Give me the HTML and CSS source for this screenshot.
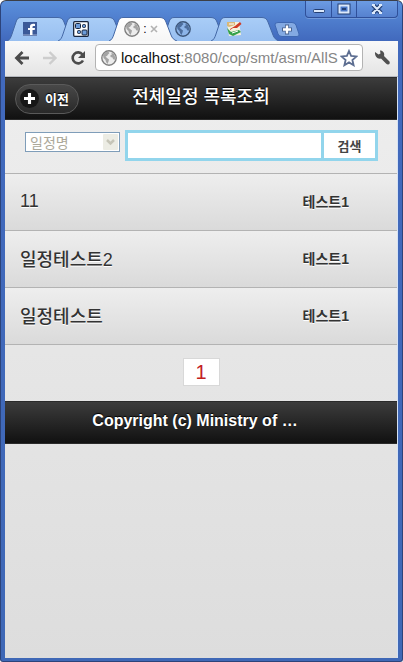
FILE: index.html
```html
<!DOCTYPE html>
<html lang="ko">
<head>
<meta charset="utf-8">
<meta name="viewport" content="width=device-width, initial-scale=1">
<title>전체일정 목록조회</title>
<link rel="stylesheet" href="styles.css">
</head>
<body>
<svg class="defs" aria-hidden="true">
  <defs>
    <linearGradient id="tabFill" x1="0" y1="0" x2="0" y2="1"><stop offset="0" stop-color="#a9cdf7"/><stop offset="1" stop-color="#98bff0"/></linearGradient>
    <linearGradient id="tabActive" x1="0" y1="0" x2="0" y2="1"><stop offset="0" stop-color="#ffffff"/><stop offset="1" stop-color="#f6f6f6"/></linearGradient>
    <symbol id="tabShape" viewBox="0 0 68 24"><path d="M0 24C3 23 4 20 5 17L9 5C10 2 11 .5 14 .5H51C54 .5 56 2 57 5L62 18C63 21 65 23 68 24"/></symbol>
    <symbol id="globe" viewBox="0 0 16 16">
      <circle cx="8" cy="8" r="7.200" fill="var(--sea)" stroke="var(--line)" stroke-width="1.400"/>
      <path d="M2 5L4 2.500L7 1.500L8.500 3L7 4.500L6 6L4.500 6.500L6 8L8 9.500L7.500 11.500L6.500 14L5 12L4.500 10L2.500 8ZM10 2.500L13 4L14.300 7.500L13.500 10L12 9L11.500 7.500L9.500 7L9.500 5L11 4.500Z" fill="var(--land)"/>
    </symbol>
  </defs>
</svg>
<div class="window">
  <header class="titlebar">
    <nav class="tabs" aria-label="탭">
      <button class="tab" aria-label="Facebook"><svg class="shape"><use href="#tabShape"/></svg>
        <svg class="fav" viewBox="0 0 16 16"><rect x="1" y="1" width="14" height="14" fill="#3b5998"/><rect x="1" y="13" width="14" height="2" fill="#6d84b4"/><path d="M8 14V9H6V7H8V5.500C8 3.500 9.500 2.500 13 3V5H12C11 5 10.500 5.300 10.500 6V7H13L12.700 9H10.500V14Z" fill="#fff"/></svg></button>
      <button class="tab" aria-label="앱"><svg class="shape"><use href="#tabShape"/></svg>
        <svg class="fav" viewBox="0 0 16 16"><rect x=".7" y=".7" width="14.600" height="14.600" rx="1" fill="#fff" stroke="#17243c" stroke-width="1.300"/><g fill="#6c9bd8" stroke="#17243c"><rect x="2.500" y="2.500" width="5" height="5" rx="1"/><rect x="9.500" y="3.500" width="3" height="3" rx="1"/><rect x="4.500" y="9.500" width="3" height="3" rx="1"/><rect x="9" y="9" width="5" height="5" rx="1"/></g></svg></button>
      <button class="tab active" aria-label="현재 탭"><svg class="shape"><use href="#tabShape"/></svg>
        <svg class="fav globe"><use href="#globe"/></svg><span class="tab-text">:</span>
        <svg class="close" viewBox="0 0 8 8"><path d="M1 1L7 7M7 1L1 7" stroke="#b2b2b2" stroke-width="1.600"/></svg></button>
      <button class="tab" aria-label="새 페이지"><svg class="shape"><use href="#tabShape"/></svg>
        <svg class="fav globe blue"><use href="#globe"/></svg></button>
      <button class="tab" aria-label="문서"><svg class="shape"><use href="#tabShape"/></svg>
        <svg class="fav" viewBox="0 0 16 16"><path d="M1 1H13L15 14L3 15Z" fill="#f5f1dc"/><path d="M1 1H9V4L3 6L1 5Z" fill="#d9b878"/><path d="M3 3H8" stroke="#fff"/><path d="M4 8L9 5L14 1L15.500 3L11 7L7 7L4 9Z" fill="#cf3b24"/><path d="M1 7L5 11L13 9L15 11L7 15L3 13Z" fill="#35a14b"/><path d="M6 12L12 10" stroke="#fff"/></svg></button>
      <button class="new-tab" aria-label="새 탭"><svg viewBox="0 0 26 15"><path d="M4 .5H18Q21 .5 22 3L25 12Q25.500 14.500 23 14.500H8Q5 14.500 4 12L1 3Q.5 .5 4 .5Z" fill="#83a9e2" stroke="#3f68b2"/><path d="M13 2.500V12.500M8 7.500H18" stroke="#49638f" stroke-width="4"/><path d="M13 3.500V11.500M9 7.500H17" stroke="#fff" stroke-width="2.400"/></svg></button>
    </nav>
    <div class="controls">
      <button aria-label="최소화"><svg viewBox="0 0 14 12"><rect x="1.500" y="6.500" width="11" height="3" rx="1" fill="#dce9fb" stroke="#233f74"/></svg></button>
      <button aria-label="최대화"><svg viewBox="0 0 14 12"><rect x="2.500" y="2.500" width="9" height="7" fill="none" stroke="#233f74" stroke-width="4"/><rect x="2.500" y="2.500" width="9" height="7" fill="#4a78c8" stroke="#dce9fb" stroke-width="2"/><rect x="5" y="5" width="4" height="2" fill="#233f74"/></svg></button>
      <button class="wide" aria-label="닫기"><svg viewBox="0 0 14 12"><path d="M3 2L11 10M11 2L3 10" stroke="#233f74" stroke-width="4.500"/><path d="M3 2L11 10M11 2L3 10M2 2H5M9 2H12M2 10H5M9 10H12" stroke="#dce9fb" stroke-width="2"/></svg></button>
    </div>
  </header>
  <div class="toolbar">
    <button class="tool" aria-label="뒤로"><svg viewBox="0 0 16 16"><path d="M15 8H3M8.500 2L2.500 8L8.500 14" fill="none" stroke="#4b4b4b" stroke-width="2.800"/></svg></button>
    <button class="tool" aria-label="앞으로" disabled><svg viewBox="0 0 16 16"><path d="M1 8H13M7.500 2L13.500 8L7.500 14" fill="none" stroke="#cdcdcd" stroke-width="2.400"/></svg></button>
    <button class="tool" aria-label="새로고침"><svg viewBox="0 0 16 16"><path d="M12.500 4.500A5.500 5.500 0 1 0 13 10.500" fill="none" stroke="#4b4b4b" stroke-width="2.600"/><path d="M15 1V8H8Z" fill="#4b4b4b"/></svg></button>
    <div class="omnibox">
      <svg class="fav globe"><use href="#globe"/></svg>
      <a class="url" href="#"><span>localhost</span>:8080/cop/smt/asm/AllS</a>
      <button class="star" aria-label="북마크"><svg viewBox="0 0 18 18"><path d="M9 2L11.100 6.900L16.500 7.400L12.400 11L13.600 16.200L9 13.400L4.400 16.200L5.600 11L1.500 7.400L6.900 6.900Z" fill="#fff" stroke="#5d6e91" stroke-width="1.800"/></svg></button>
    </div>
    <button class="wrench" aria-label="설정"><svg viewBox="0 0 18 18"><path d="M2 3L5.500 5.500L7.500 4.500L7 1.500C10 1.500 12 4 11 7L16.500 12.500Q17.500 15 15 15.500Q14 15.500 13 14.500L8 9.500C4.500 10.500 1.500 7 2 3Z" fill="#505050"/></svg></button>
  </div>
  <main class="page">
    <div class="bar page-head">
      <a class="back" href="#"><span class="plus"><svg viewBox="0 0 12 12"><path d="M6 0V12M0 6H12" stroke="#fff" stroke-width="3.400"/></svg></span>이전</a>
      <h1>전체일정 목록조회</h1>
    </div>
    <form class="search">
      <span class="picker">
        <select aria-label="검색 조건" disabled><option>일정명</option></select>
        <svg viewBox="0 0 15 16"><rect width="15" height="16" rx="1" fill="#ecece4"/><path d="M4 6L7.500 9.500L11 6" fill="none" stroke="#c6c5b8" stroke-width="2.500"/></svg>
      </span>
      <span class="query"><input type="text" aria-label="검색어"><button type="button">검색</button></span>
    </form>
    <ul class="list">
      <li><a href="#"><span class="name">11</span><span class="who">테스트1</span></a></li>
      <li><a href="#"><span class="name">일정테스트2</span><span class="who">테스트1</span></a></li>
      <li><a href="#"><span class="name">일정테스트</span><span class="who">테스트1</span></a></li>
    </ul>
    <nav class="paging" aria-label="페이지"><a href="#">1</a></nav>
    <footer class="bar foot">Copyright (c) Ministry of …</footer>
  </main>
</div>
</body>
</html>
```
FILE: styles.css
```css
* { box-sizing: border-box; }
body {
  margin: 0;
  background: #fff;
  font-family: "Liberation Sans", "Noto Sans CJK KR", sans-serif;
  color: #333;
}
button { padding: 0; border: 0; background: none; font-family: inherit; }
a { color: inherit; text-decoration: none; }
svg { display: block; }
.defs { position: absolute; width: 0; height: 0; }

.window {
  display: flex;
  flex-direction: column;
  min-height: 100vh;
  padding: 0 4px 3px;
  border: 1px solid #2c437a;
  border-top-color: #3c3f46;
  border-radius: 6px 6px 3px 3px;
  background: linear-gradient(#5b90dc, #4169bd 40px, #3f68b6);
}

/* Title bar */
.titlebar {
  display: flex;
  justify-content: space-between;
  align-items: flex-start;
  height: 40px;
}
.tabs { display: flex; align-items: flex-start; padding: 16px 0 0 2px; }
.tab {
  position: relative;
  display: flex;
  align-items: center;
  flex: none;
  width: 68px;
  height: 24px;
  margin-right: -17px;
  padding-left: 15px;
}
.tab.active { z-index: 1; }
.shape {
  position: absolute;
  inset: 0;
  width: 100%;
  height: 100%;
  fill: url(#tabFill);
  stroke: #4468a6;
}
.active .shape { fill: url(#tabActive); }
.fav { position: relative; flex: none; width: 16px; height: 16px; }
.globe { --sea: #ececec; --line: #808080; --land: #a4a4a4; }
.globe.blue { --sea: #8cb4e8; --line: #3c5578; --land: #4d6e9d; }
.tab-text { position: relative; width: 10px; font-size: 12px; }
.close { position: relative; width: 8px; height: 8px; }
.new-tab { margin: 5px 0 0 12px; }
.new-tab svg { width: 26px; height: 15px; }
.controls {
  display: flex;
  flex: none;
  height: 17px;
  border: 1px solid #2f509a;
  border-top: 0;
  border-radius: 0 0 4px 4px;
  background: linear-gradient(#6c9ce3, #5681cf);
  box-shadow: 0 1px #7099da;
}
.controls button { display: grid; place-items: center; width: 25px; }
.controls button + button { border-left: 1px solid #2f509a; }
.controls .wide { width: 41px; }
.controls svg { width: 14px; height: 12px; }

/* Navigation toolbar */
.toolbar {
  display: flex;
  align-items: center;
  gap: 12px;
  height: 36px;
  padding: 0 7px 2px 9px;
  border-bottom: 1px solid #b4b7bd;
  background: linear-gradient(#f9f9f9, #e4e4e4);
}
.tool svg { width: 16px; height: 16px; }
.omnibox {
  display: flex;
  align-items: center;
  flex: 1;
  min-width: 0;
  height: 27px;
  margin-right: -2px;
  margin-left: -3px;
  padding: 0 4px 0 5px;
  border: 1px solid #b3b3b3;
  border-radius: 4px;
  background: #fff;
}
.url {
  flex: 1;
  min-width: 0;
  margin-left: 4px;
  overflow: hidden;
  white-space: nowrap;
  font-size: 15px;
  line-height: 20px;
  color: #868686;
}
.url span { color: #111; }
.star svg, .wrench svg { width: 18px; height: 18px; }

/* Page */
.page {
  flex: 1;
  border-right: 1px solid #d5e2f5;
  background: linear-gradient(#eee, #ddd);
}
.bar {
  border: 1px solid #2a2a2a;
  border-width: 1px 0;
  background: linear-gradient(#3c3c3c, #111);
  color: #fff;
  text-align: center;
  font-weight: bold;
  text-shadow: 0 -1px 1px #000;
}
.page-head {
  display: grid;
  grid-template-columns: 1fr auto 1fr;
  align-items: center;
  height: 43px;
  padding: 0 10px;
}
.page-head h1 { margin: 0; padding-bottom: 4px; font-size: 18px; line-height: 24px; font-weight: 500; }
.back {
  display: flex;
  align-items: center;
  justify-self: start;
  gap: 6px;
  height: 30px;
  padding: 0 9px 0 4px;
  border: 1px solid #5a5a5a;
  border-radius: 15px;
  background: linear-gradient(#484848, #292929);
  font-size: 13px;
}
.plus { display: grid; place-items: center; width: 19px; height: 19px; border-radius: 50%; background: #171717; }
.plus svg { width: 11px; height: 11px; }

.search {
  display: flex;
  align-items: flex-start;
  gap: 5px;
  padding: 10px 20px 12px;
  border-bottom: 1px solid #b3b3b3;
}
.picker { position: relative; flex: none; width: 95px; margin-top: 2px; }
.picker select {
  display: block;
  width: 100%;
  height: 20px;
  padding: 0 0 0 4px;
  border: 1px solid #7f9db9;
  border-radius: 0;
  appearance: none;
  background: #fff;
  color: #aca899;
  opacity: 1;
  font: 14px/18px "Noto Sans CJK KR", sans-serif;
}
.picker svg { position: absolute; top: 2px; right: 2px; width: 15px; height: 16px; }
.query { display: flex; flex: 1; height: 31px; border: 3px solid #92d5ec; background: #fff; }
.query input { flex: 1; min-width: 0; padding: 0 6px; border: 0; outline: 0; background: #fff; font-size: 14px; }
.query button { width: 54px; border-left: 3px solid #92d5ec; font-size: 13px; font-weight: bold; color: #444; }

.list { margin: 0; padding: 0; list-style: none; }
.list a {
  display: flex;
  align-items: center;
  height: 57px;
  padding: 0 48px 2px 15px;
  border-bottom: 1px solid #b3b3b3;
  background: linear-gradient(#eee, #dadada);
  text-shadow: 0 1px #fff;
}
.name { flex: 1; font-size: 18px; font-weight: 500; }
.who { font-size: 14px; font-weight: bold; }
.paging { display: flex; justify-content: center; padding: 13px 0 15px; }
.paging a {
  width: 37px;
  height: 28px;
  border: 1px solid #d8d8d8;
  background: #fff;
  color: #c2201f;
  text-align: center;
  font-size: 20px;
  line-height: 27px;
}
.foot { padding: 9px 40px 12px 28px; font-size: 16px; line-height: 20px; }
```
